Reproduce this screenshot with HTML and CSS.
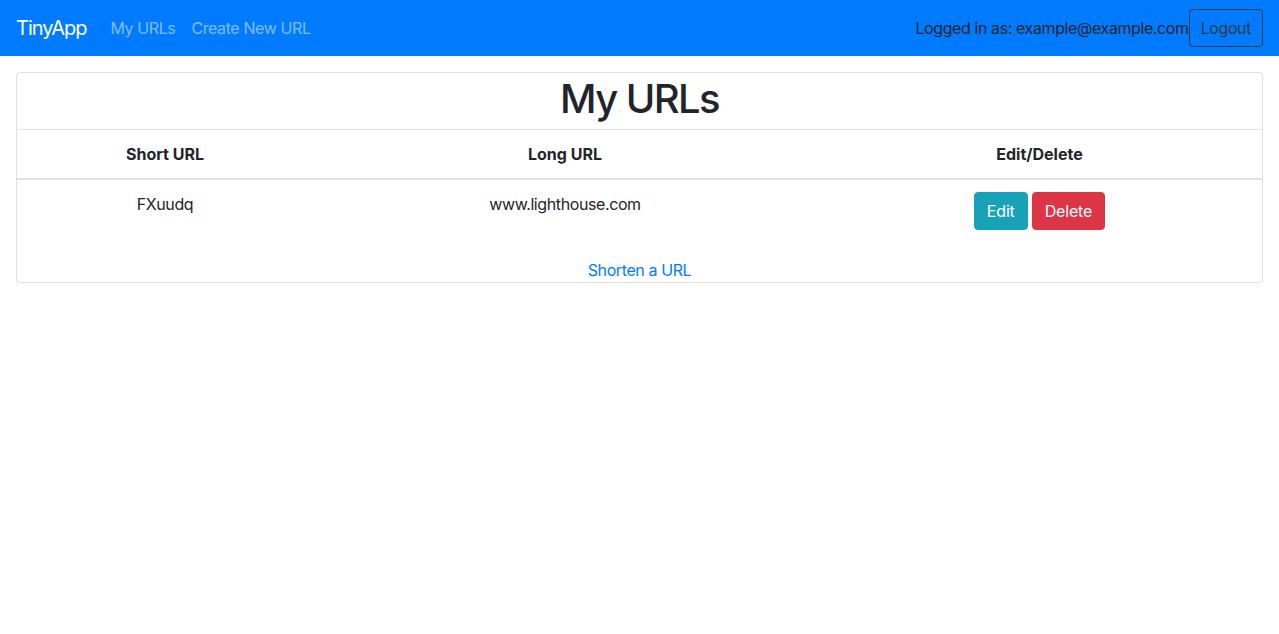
FILE: index.html
```html
<!DOCTYPE html>
<html lang="en">
<head>
<meta charset="utf-8">
<title>TinyApp</title>
<link rel="stylesheet" href="styles.css">
</head>
<body>
<nav class="navbar">
  <a class="brand" href="#">TinyApp</a>
  <div class="nav-links">
    <a class="nav-link" href="#">My URLs</a>
    <a class="nav-link" href="#">Create New URL</a>
  </div>
  <div class="nav-right">
    <span class="logged">Logged in as: example@example.com</span>
    <button class="btn btn-outline-dark">Logout</button>
  </div>
</nav>
<main class="main">
  <div class="card">
    <h1 class="card-title">My URLs</h1>
    <table class="table">
      <thead>
        <tr>
          <th class="col-short">Short URL</th>
          <th class="col-long">Long URL</th>
          <th class="col-edit">Edit/Delete</th>
        </tr>
      </thead>
      <tbody>
        <tr>
          <td>FXuudq</td>
          <td>www.lighthouse.com</td>
          <td><div class="actions"><button class="btn btn-info">Edit</button><button class="btn btn-danger">Delete</button></div></td>
        </tr>
      </tbody>
    </table>
    <div class="card-footer"><a class="link" href="#">Shorten a URL</a></div>
  </div>
</main>
</body>
</html>
```

FILE: styles.css
```css
* { box-sizing: border-box; }
html, body { margin: 0; padding: 0; }
body {
  font-family: Inter, "Noto Sans", sans-serif;
  font-size: 16px;
  line-height: 1.5;
  letter-spacing: -0.025em;
  color: #212529;
  background: #fff;
}
a { text-decoration: none; }
.navbar {
  display: flex;
  align-items: center;
  height: 56px;
  padding: 8px 16px;
  background: #007bff;
}
.brand {
  color: #fff;
  font-size: 20px;
  line-height: 30px;
  letter-spacing: -0.05em;
  margin-right: 16px;
}
.nav-links { display: flex; }
.nav-link {
  color: rgba(255,255,255,0.5);
  padding: 8px;
}
.nav-right {
  margin-left: auto;
  display: flex;
  align-items: center;
}
.logged { color: #212529; }
.btn {
  font-family: inherit;
  font-size: 16px;
  line-height: 24px;
  letter-spacing: -0.01em;
  padding: 6px 12px;
  border-radius: 4px;
  border: 1px solid transparent;
  cursor: pointer;
}
.btn-outline-dark {
  background: transparent;
  border-color: #343a40;
  color: #343a40;
  padding: 6px 11px;
  letter-spacing: -0.025em;
}
.btn-info { background: #17a2b8; border-color: #17a2b8; color: #fff; }
.btn-danger { background: #dc3545; border-color: #dc3545; color: #fff; }
.main { padding: 16px; }
.card {
  border: 1px solid rgba(0,0,0,0.125);
  border-radius: 4px;
}
.card-title {
  margin: 0;
  height: 57px;
  font-size: 40px;
  font-weight: 500;
  line-height: 52px;
  letter-spacing: -0.04em;
  text-align: center;
  border-bottom: 1px solid #dee2e6;
}
.table {
  width: 100%;
  border-collapse: collapse;
  table-layout: fixed;
}
.table th, .table td {
  padding: 12px;
  text-align: center;
  vertical-align: top;
}
.table th {
  font-weight: 700;
  letter-spacing: 0;
  border-bottom: 2px solid #dee2e6;
}
.col-short { width: 296px; }
.col-long { width: 504px; }
.actions { display: flex; justify-content: center; gap: 4px; }
.card-footer {
  text-align: center;
  padding-top: 16px;
}
.link { color: #007bff; }
```
